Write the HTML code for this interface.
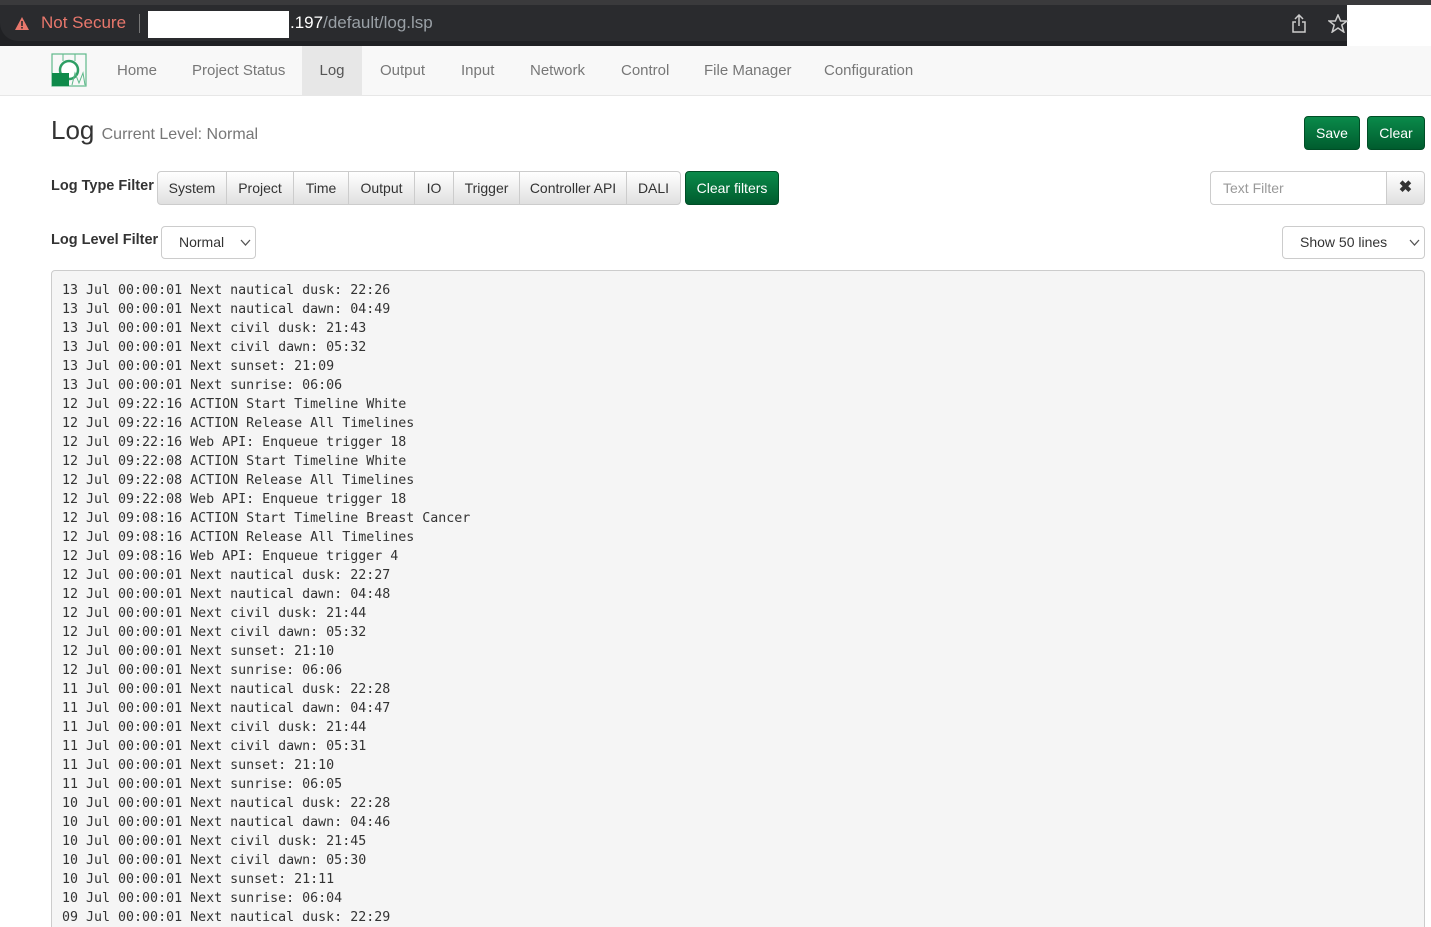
<!DOCTYPE html><html><head><style>
*{box-sizing:border-box;margin:0;padding:0}
html,body{width:1431px;height:927px;overflow:hidden}
body{background:#fff;font-family:"Liberation Sans",sans-serif;color:#333;position:relative;font-size:14px}
.a{position:absolute}
.top{left:0;top:0;width:1431px;height:5px;background:#3a3a3c}
.bar{left:0;top:5px;width:1347px;height:41px;background:#202124}
.nav{left:0;top:46px;width:1431px;height:50px;background:#f8f8f8;border-bottom:1px solid #e7e7e7}
.nav span{position:absolute;top:0;height:49px;line-height:49px;color:#777;font-size:15px}
.fb{top:171px;height:34px;border:1px solid #ccc;background:linear-gradient(#fff,#e0e0e0);line-height:32px;text-align:center;font-size:14px;color:#333}
.g{background:linear-gradient(#0a8a4a,#005c2e);border:1px solid #004d26;color:#fff;border-radius:4px;text-align:center;font-size:14px}
.log{left:51px;top:270px;width:1374px;height:700px;background:#f5f5f5;border:1px solid #ccc;border-radius:4px;padding:10px 10px;font-family:"DejaVu Sans Mono",monospace;font-size:13.3px;line-height:19px;white-space:pre;color:#333}
.sel{border:1px solid #ccc;border-radius:4px;background:#fff;height:33px;top:226px;line-height:31px;font-size:14px}
</style></head><body>
<div class="a top"></div>
<div class="a bar">
<div class="a" style="left:0;top:0;width:1347px;height:36px;background:#2a2b2e;border-radius:0 0 0 18px"></div>
<svg class="a" style="left:14px;top:11px" width="16" height="15"><path d="M8 1L15 14H1Z" fill="#e8776c"/><rect x="7.2" y="5" width="1.6" height="5" fill="#2a2b2e"/><rect x="7.2" y="11" width="1.6" height="1.6" fill="#2a2b2e"/></svg>
<div class="a" style="left:41px;top:8px;color:#e8776c;font-size:17px">Not Secure</div>
<div class="a" style="left:139px;top:9px;width:1px;height:19px;background:#777"></div>
<div class="a" style="left:148px;top:6px;width:141px;height:27px;background:#fff"></div>
<div class="a" style="left:290px;top:8px;font-size:17px;color:#9aa0a6"><span style="color:#fff">.197</span>/default/log.lsp</div>
<svg class="a" style="left:1291px;top:9px" width="16" height="20" fill="none" stroke="#ccc" stroke-width="1.5"><path d="M8 1V12M4 5L8 1L12 5M5 8H2V18H14V8H11"/></svg>
<svg class="a" style="left:1328px;top:9px" width="20" height="19" fill="none" stroke="#ccc" stroke-width="1.5"><path d="M10 1L12.6 7H19L13.8 11L15.8 18L10 14L4.2 18L6.2 11L1 7H7.4Z"/></svg>
</div>
<div class="a nav">
<svg class="a" style="left:51px;top:7px" width="36" height="34"><rect x="1" y="1" width="34" height="32" fill="none" stroke="#5fb98a" stroke-width="1.2"/><line x1="12" y1="1" x2="12" y2="8" stroke="#5fb98a"/><line x1="24" y1="1" x2="24" y2="8" stroke="#5fb98a"/><circle cx="18" cy="17" r="9" fill="#fff" stroke="#2e9e64" stroke-width="2.5"/><rect x="1" y="20" width="17" height="13" fill="#0e8a4a"/><path d="M21 32L24 20L28 30L32 20L34 32" fill="none" stroke="#5fb98a"/></svg>
<span style="left:117px">Home</span><span style="left:192px">Project Status</span>
<span style="left:302px;width:60px;text-align:center;background:#e7e7e7;color:#555">Log</span>
<span style="left:380px">Output</span><span style="left:461px">Input</span><span style="left:530px">Network</span><span style="left:621px">Control</span><span style="left:704px">File Manager</span><span style="left:824px">Configuration</span>
</div>
<div class="a" style="left:51px;top:115px;font-size:26px;color:#333">Log <span style="font-size:16px;color:#777">Current Level: Normal</span></div>
<div class="a g" style="left:1304px;top:116px;width:56px;height:34px;line-height:32px">Save</div>
<div class="a g" style="left:1367px;top:116px;width:58px;height:34px;line-height:32px">Clear</div>
<div class="a" style="left:51px;top:178px;font-weight:bold;font-size:14.5px">Log Type Filter</div>
<div class="a fb" style="left:157px;width:70px;border-radius:4px 0 0 4px">System</div>
<div class="a fb" style="left:226px;width:68px">Project</div>
<div class="a fb" style="left:293px;width:56px">Time</div>
<div class="a fb" style="left:348px;width:67px">Output</div>
<div class="a fb" style="left:414px;width:40px">IO</div>
<div class="a fb" style="left:453px;width:67px">Trigger</div>
<div class="a fb" style="left:519px;width:108px">Controller API</div>
<div class="a fb" style="left:626px;width:55px;border-radius:0 4px 4px 0">DALI</div>
<div class="a g" style="left:685px;top:171px;width:94px;height:34px;line-height:32px">Clear filters</div>
<div class="a" style="left:1210px;top:171px;width:177px;height:34px;border:1px solid #ccc;border-radius:4px 0 0 4px;padding-left:12px;line-height:32px;color:#999">Text Filter</div>
<div class="a fb" style="left:1386px;width:39px;border-radius:0 4px 4px 0;font-weight:bold;font-size:16px">✖</div>
<div class="a" style="left:51px;top:232px;font-weight:bold;font-size:14.5px">Log Level Filter</div>
<div class="a sel" style="left:161px;width:95px;padding-left:17px">Normal<svg class="a" style="left:78px;top:12px" width="11" height="7" fill="none" stroke="#555" stroke-width="1.3"><path d="M1 1L5.5 6L10 1"/></svg></div>
<div class="a sel" style="left:1282px;width:143px;padding-left:17px">Show 50 lines<svg class="a" style="left:126px;top:12px" width="11" height="7" fill="none" stroke="#555" stroke-width="1.3"><path d="M1 1L5.5 6L10 1"/></svg></div>
<div class="a log">13 Jul 00:00:01 Next nautical dusk: 22:26
13 Jul 00:00:01 Next nautical dawn: 04:49
13 Jul 00:00:01 Next civil dusk: 21:43
13 Jul 00:00:01 Next civil dawn: 05:32
13 Jul 00:00:01 Next sunset: 21:09
13 Jul 00:00:01 Next sunrise: 06:06
12 Jul 09:22:16 ACTION Start Timeline White
12 Jul 09:22:16 ACTION Release All Timelines
12 Jul 09:22:16 Web API: Enqueue trigger 18
12 Jul 09:22:08 ACTION Start Timeline White
12 Jul 09:22:08 ACTION Release All Timelines
12 Jul 09:22:08 Web API: Enqueue trigger 18
12 Jul 09:08:16 ACTION Start Timeline Breast Cancer
12 Jul 09:08:16 ACTION Release All Timelines
12 Jul 09:08:16 Web API: Enqueue trigger 4
12 Jul 00:00:01 Next nautical dusk: 22:27
12 Jul 00:00:01 Next nautical dawn: 04:48
12 Jul 00:00:01 Next civil dusk: 21:44
12 Jul 00:00:01 Next civil dawn: 05:32
12 Jul 00:00:01 Next sunset: 21:10
12 Jul 00:00:01 Next sunrise: 06:06
11 Jul 00:00:01 Next nautical dusk: 22:28
11 Jul 00:00:01 Next nautical dawn: 04:47
11 Jul 00:00:01 Next civil dusk: 21:44
11 Jul 00:00:01 Next civil dawn: 05:31
11 Jul 00:00:01 Next sunset: 21:10
11 Jul 00:00:01 Next sunrise: 06:05
10 Jul 00:00:01 Next nautical dusk: 22:28
10 Jul 00:00:01 Next nautical dawn: 04:46
10 Jul 00:00:01 Next civil dusk: 21:45
10 Jul 00:00:01 Next civil dawn: 05:30
10 Jul 00:00:01 Next sunset: 21:11
10 Jul 00:00:01 Next sunrise: 06:04
09 Jul 00:00:01 Next nautical dusk: 22:29</div>
</body></html>
